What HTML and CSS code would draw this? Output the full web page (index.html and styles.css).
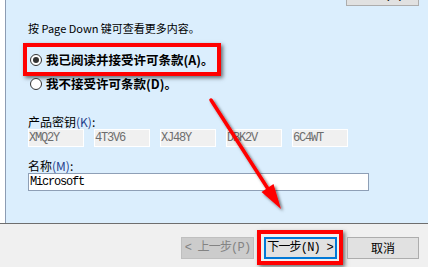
FILE: index.html
```html
<!DOCTYPE html>
<html lang="zh-CN">
<head>
    <meta charset="UTF-8">
    <title>安装 - 许可条款</title>
    <link rel="stylesheet" href="styles.css">
</head>
<body>
    <div class="setup">
        <div class="main">
            <div class="edge"></div>
            <div class="panel">
                <div class="top-row">
                    <button class="btn top-btn">打印(P)</button>
                </div>
                <p class="hint">按 Page Down 键可查看更多内容。</p>

                <div class="mark-box">
                    <label class="radio-row">
                        <span class="radio checked"></span>
                        <span>我已阅读并接受许可条款(A)。</span>
                    </label>
                </div>
                <label class="radio-row second">
                    <span class="radio"></span>
                    <span>我不接受许可条款(D)。</span>
                </label>

                <div class="field-label">产品密钥<span class="key">(K)</span>:</div>
                <div class="key-row">
                    <div class="key-box">XMQ2Y</div>
                    <div class="key-box">4T3V6</div>
                    <div class="key-box">XJ48Y</div>
                    <div class="key-box">DBK2V</div>
                    <div class="key-box">6C4WT</div>
                </div>

                <div class="field-label name-label">名称<span class="key">(M)</span>:</div>
                <div class="name-input">Microsoft</div>
            </div>
        </div>

        <div class="footer">
            <button class="btn nav-btn disabled">&lt; 上一步(P)</button>
            <div class="mark-box footer-mark">
                <button class="btn nav-btn default">下一步(N) &gt;</button>
            </div>
            <button class="btn nav-btn cancel">取消</button>
        </div>
    </div>

    <!-- annotation arrow -->
    <svg class="arrow" width="428" height="267" viewBox="0 0 428 267">
        <defs>
            <filter id="shade" x="-20%" y="-20%" width="140%" height="140%">
                <feDropShadow dx="2" dy="2" stdDeviation="1.5" flood-color="#000" flood-opacity="0.55"/>
            </filter>
        </defs>
        <g filter="url(#shade)">
            <line x1="211" y1="100" x2="270" y2="192" stroke="#ff0000" stroke-width="3.5" stroke-linecap="round"/>
            <polygon points="273.5,184 261.5,192 281,209" fill="#ff0000"/>
        </g>
    </svg>
</body>
</html>
```

FILE: styles.css
```css
/* Base */
* {
    margin: 0;
    padding: 0;
    box-sizing: border-box;
}

body {
    width: 428px;
    height: 267px;
    overflow: hidden;
    background-color: #f0f0f0;
    font-family: "Noto Sans CJK SC", "Liberation Sans", sans-serif;
    font-size: 12px;
    color: #000;
    position: relative;
}

.setup {
    display: flex;
    flex-direction: column;
    height: 267px;
}

.main {
    display: flex;
    height: 223px;
}

.edge {
    width: 5px;
    background: #ffffff;
}

.panel {
    flex: 1;
    background-color: #dbeefd;
    border-left: 1px solid #8c9cb3;
    padding-left: 22px;
}

/* Buttons */
.btn {
    font-family: "Liberation Mono", "Noto Sans CJK SC", monospace;
    font-size: 12px;
    letter-spacing: -0.8px;
    white-space: nowrap;
    padding: 0;
    background: #e1e1e1;
    border: 1px solid #adadad;
    color: #000;
    height: 22px;
    line-height: 18px;
}

.top-row {
    display: flex;
    justify-content: flex-end;
    height: 6px;
    padding-right: 9px;
}

.top-btn {
    width: 73px;
    height: 23px;
    margin-top: -17px;
}

.hint {
    margin-top: 14px;
    font-size: 11px;
    line-height: 16px;
}

/* Red highlight box */
.mark-box {
    border: 4px solid #ff0000;
    box-shadow: 2px 2px 4px rgba(0, 0, 0, 0.55);
}

.panel .mark-box {
    width: 198px;
    height: 33px;
    margin-top: 7px;
    margin-left: -5px;
    padding-left: 3px;
    display: flex;
    align-items: center;
}

.radio-row {
    display: flex;
    align-items: center;
    gap: 4px;
    font-weight: bold;
    font-size: 12.5px;
    line-height: 16px;
    white-space: nowrap;
}

.radio-row.second {
    padding-left: 2px;
    height: 16px;
}

.radio {
    width: 12px;
    height: 12px;
    border: 1px solid #333;
    border-radius: 50%;
    background: #fff;
    display: flex;
    align-items: center;
    justify-content: center;
    flex-shrink: 0;
}

.radio.checked::after {
    content: "";
    width: 6px;
    height: 6px;
    border-radius: 50%;
    background: #333;
}

/* Fields */
.field-label {
    margin-top: 23px;
    line-height: 14px;
}

.field-label .key {
    color: #1f3f8c;
}

.key-row {
    display: flex;
    gap: 10px;
}

.key-box {
    width: 56px;
    height: 18px;
    background: #f0f0f0;
    border: 1px solid #ffffff;
    color: #6d6d6d;
    font-family: "Liberation Mono", monospace;
    font-size: 12px;
    letter-spacing: -1.2px;
    line-height: 16px;
}

.name-label {
    margin-top: 12px;
}

.name-input {
    width: 341px;
    height: 18px;
    background: #fff;
    border: 1px solid #8e9fb6;
    font-family: "Liberation Mono", monospace;
    font-size: 12px;
    letter-spacing: -1.2px;
    line-height: 16px;
    padding-left: 1px;
}

/* Footer */
.footer {
    flex: 1;
    border-top: 1px solid #6e6e6e;
    display: flex;
    justify-content: flex-end;
    align-items: flex-start;
    padding-top: 6px;
    padding-right: 9px;
}

.nav-btn {
    width: 73px;
    margin-top: 7px;
}

.nav-btn.disabled {
    background: #cccccc;
    border-color: #bfbfbf;
    color: #838383;
    margin-right: 3px;
}

.footer-mark {
    width: 86px;
    height: 35px;
    display: flex;
    align-items: center;
    justify-content: center;
}

.nav-btn.default {
    margin-top: 0;
    border: 2px solid #0078d7;
}

.nav-btn.cancel {
    width: 72px;
    margin-left: 4px;
    letter-spacing: 0;
    font-family: "Noto Sans CJK SC", sans-serif;
}

/* Annotation */
.arrow {
    position: absolute;
    left: 0;
    top: 0;
    pointer-events: none;
}
```
